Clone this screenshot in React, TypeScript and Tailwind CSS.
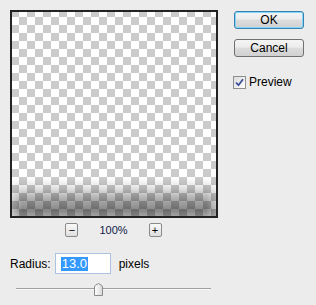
import React from "react";

const btn =
  "flex h-[18px] w-[70px] items-center justify-center rounded-[3px] border bg-[linear-gradient(#f4f4f4,#ececec_45%,#dcdcdc_50%,#d0d0d0)] text-[12px] text-black";

const smallBtn =
  "flex h-[14px] w-[13px] items-center justify-center rounded-[2px] border border-[#8a8a8a] bg-[linear-gradient(#fafafa,#dedede)] text-[11px] leading-none text-black";

const Check = () => (
  <div className="flex h-[13px] w-[13px] items-center justify-center border border-[#8e8f8f] bg-[linear-gradient(135deg,#dcdcdc,#ffffff)]">
    <svg width="9" height="9" viewBox="0 0 9 9">
      <path
        d="M1 4.5 L3.5 7.2 L8 1.2"
        fill="none"
        stroke="#3a4f9a"
        strokeWidth="1.8"
      />
    </svg>
  </div>
);

const Thumb = () => (
  <svg width="9" height="13" viewBox="0 0 9 13" className="absolute left-[78px] top-0">
    <defs>
      <linearGradient id="th" x1="0" x2="1">
        <stop offset="0" stopColor="#ffffff" />
        <stop offset="1" stopColor="#d8d8d8" />
      </linearGradient>
    </defs>
    <path
      d="M0.5 12.5 L0.5 4 Q0.5 3 1.5 2.2 L4.5 0.5 L7.5 2.2 Q8.5 3 8.5 4 L8.5 12.5 Z"
      fill="url(#th)"
      stroke="#8a8a8a"
    />
  </svg>
);

export default function App() {
  return (
    <div className="h-[305px] w-[316px] bg-[#ececec] font-['Liberation_Sans',Arial,sans-serif] text-[12px] text-black">
      <div className="flex pl-[10px] pt-[10px]">
        <div className="flex w-[208px] flex-col">
          <div className="relative h-[208px] w-[208px] border-2 border-[#222] bg-[conic-gradient(#fff_25%,#cbcbcb_0_50%,#fff_0_75%,#cbcbcb_0)] bg-[length:16px_16px] bg-[position:-1px_-3px]">
            <div className="absolute inset-x-0 bottom-0 h-[38px] bg-[linear-gradient(rgba(0,0,0,0),rgba(0,0,0,0.1)_25%,rgba(0,0,0,0.35)_60%,rgba(0,0,0,0.47)_85%,rgba(0,0,0,0.36))] [mask-image:linear-gradient(to_right,rgba(0,0,0,0.55),#000_10px,#000_calc(100%-10px),rgba(0,0,0,0.55))]" />
          </div>
          <div className="mt-[5px] flex h-[14px] items-center justify-center gap-[21px] pr-[1px]">
            <div className={smallBtn}>−</div>
            <span className="text-[11px] text-[#0f1a4a]">100%</span>
            <div className={smallBtn}>+</div>
          </div>
        </div>
        <div className="ml-[16px] flex flex-col pt-[1px]">
          <div className={`${btn} border-[#3c7fb1] shadow-[inset_0_0_0_1px_#7fd8f8]`}>OK</div>
          <div className={`${btn} mt-[10px] border-[#707070]`}>Cancel</div>
          <div className="ml-[-1px] mt-[16px] flex items-center gap-[3px]">
            <Check />
            <span>Preview</span>
          </div>
        </div>
      </div>
      <div className="ml-[10px] mt-[16px] flex h-[21px] items-center">
        <span>Radius:</span>
        <div className="ml-[4px] flex h-[21px] w-[56px] items-center border border-[#a9c3e0] bg-white pl-[5px]">
          <span className="bg-[#3399ff] px-[1px] text-[13px] leading-[14px] text-white">13.0</span>
        </div>
        <span className="ml-[8px]">pixels</span>
      </div>
      <div className="relative ml-[16px] mt-[9px] h-[13px] w-[195px]">
        <div className="absolute inset-x-0 top-[5px] h-[2px] border-t border-[#a0a0a0] bg-[#f8f8f8]" />
        <Thumb />
      </div>
    </div>
  );
}
